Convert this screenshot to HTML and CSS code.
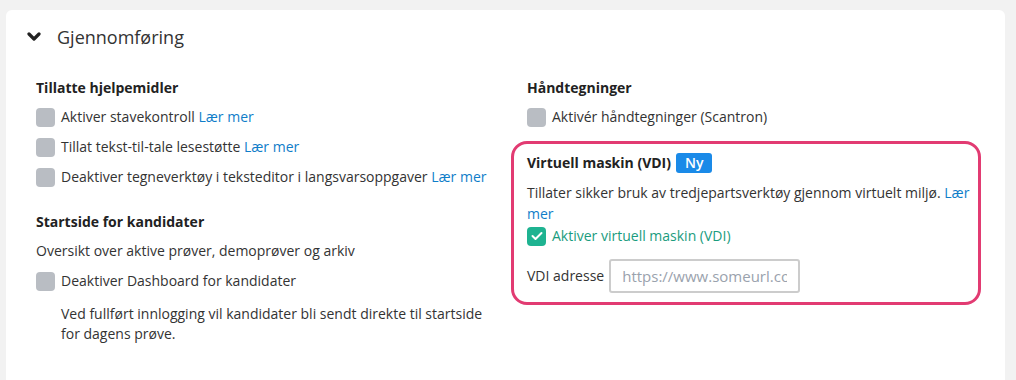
FILE: index.html
```html
<!DOCTYPE html>
<html lang="no">
<head>
  <meta charset="UTF-8">
  <title>Gjennomføring</title>
  <link rel="stylesheet" href="styles.css">
</head>
<body>
  <div class="card">
    <div class="card-header">
      <svg class="chevron" width="14" height="10" viewBox="0 0 14 10">
        <path d="M2 2 L7 7 L12 2" fill="none" stroke="#222" stroke-width="3.2" stroke-linecap="round" stroke-linejoin="round"/>
      </svg>
      <span class="card-title">Gjennomføring</span>
    </div>

    <div class="card-body">
      <div class="column">
        <div class="section">
          <h4>Tillatte hjelpemidler</h4>
          <label class="check"><span class="box"></span>Aktiver stavekontroll&nbsp;<a href="#">Lær mer</a></label>
          <label class="check"><span class="box"></span>Tillat tekst-til-tale lesestøtte&nbsp;<a href="#">Lær mer</a></label>
          <label class="check"><span class="box"></span>Deaktiver tegneverktøy i teksteditor i langsvarsoppgaver&nbsp;<a href="#">Lær mer</a></label>
        </div>

        <div class="section">
          <h4>Startside for kandidater</h4>
          <p class="text">Oversikt over aktive prøver, demoprøver og arkiv</p>
          <label class="check"><span class="box"></span>Deaktiver Dashboard for kandidater</label>
          <p class="help">Ved fullført innlogging vil kandidater bli sendt direkte til startside for dagens prøve.</p>
        </div>
      </div>

      <div class="column right">
        <div class="section padded">
          <h4>Håndtegninger</h4>
          <label class="check"><span class="box"></span>Aktivér håndtegninger (Scantron)</label>
        </div>

        <div class="highlight">
          <h4>Virtuell maskin (VDI) <span class="badge">Ny</span></h4>
          <p class="text desc">Tillater sikker bruk av tredjepartsverktøy gjennom virtuelt miljø. <a href="#">Lær mer</a></p>
          <label class="check checked">
            <span class="box">
              <svg width="12" height="10" viewBox="0 0 12 10"><path d="M1.5 5 L4.5 8 L10.5 2" fill="none" stroke="#fff" stroke-width="2" stroke-linecap="round" stroke-linejoin="round"/></svg>
            </span>Aktiver virtuell maskin (VDI)
          </label>
          <div class="field">
            <span>VDI adresse</span>
            <input type="text" placeholder="https://www.someurl.com">
          </div>
        </div>
      </div>
    </div>
  </div>
</body>
</html>
```

FILE: styles.css
```css
body {
  margin: 0;
  background: #f2f2f2;
  font-family: 'Open Sans', sans-serif;
  font-size: 14px;
  line-height: 20px;
  color: #333;
  overflow: hidden;
}

.card {
  margin: 10px 11px 0 6px;
  background: #fff;
  border-radius: 6px 6px 0 0;
  height: calc(100vh - 10px);
}

.card-header {
  display: flex;
  align-items: center;
  height: 54px;
  padding: 0 0 0 21px;
}

.chevron {
  margin-right: 16px;
}

.card-title {
  font-size: 18px;
  color: #333;
}

.card-body {
  display: grid;
  grid-template-columns: 475px 470px;
  padding: 14px 0 0 30px;
}

.section {
  margin-bottom: 25px;
}

.section.padded {
  padding-left: 16px;
  margin-bottom: 14px;
}

h4 {
  margin: 0 0 9px;
  font-size: 14px;
  line-height: 20px;
  font-weight: 700;
  color: #222;
  display: flex;
  align-items: center;
}

.check {
  display: flex;
  align-items: center;
  margin-bottom: 10px;
  cursor: pointer;
}

.box {
  width: 19px;
  height: 19px;
  border-radius: 4px;
  background: #b9bdc3;
  margin-right: 6px;
  flex-shrink: 0;
  display: flex;
  align-items: center;
  justify-content: center;
}

a {
  color: #0f7dc9;
  text-decoration: none;
}

.text {
  margin: 0 0 10px;
}

.help {
  margin: 13px 0 0 25px;
  width: 430px;
}

.highlight {
  border: 3px solid #e23b72;
  border-radius: 16px;
  padding: 9px 4px 9px 13px;
}

.badge {
  background: #1a8ae8;
  color: #fff;
  font-weight: 600;
  border-radius: 3px;
  padding: 0 9px;
  margin-left: 5px;
  line-height: 20px;
}

.desc {
  margin: 8px 0 2px;
  line-height: 21px;
}

.check.checked {
  color: #1a9c7e;
  margin-bottom: 13px;
}

.check.checked .box {
  background: #1eb391;
}

.field {
  display: flex;
  align-items: center;
  gap: 5px;
}

.field input {
  width: 191px;
  height: 34px;
  box-sizing: border-box;
  border: 2px solid #ccc;
  border-radius: 3px;
  padding: 0 11px;
  font-family: 'Open Sans', sans-serif;
  font-size: 15px;
}

.field input::placeholder {
  color: #9aa2ad;
}
```
